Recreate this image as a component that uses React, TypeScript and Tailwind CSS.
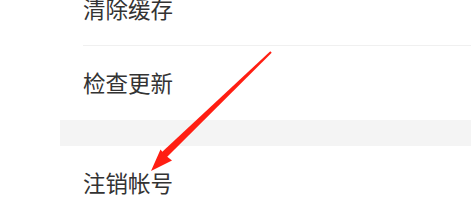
import React from 'react';

const rows = ['清除缓存', '检查更新'];

export default function App() {
  return (
    <div className="relative w-[471px] h-[209px] overflow-hidden bg-white" style={{ fontFamily: '"Noto Sans CJK SC", "Noto Sans", sans-serif' }}>
      <div className="ml-[60px] -mt-[28px] flex flex-col">
        {rows.map((label, i) => (
          <div key={label} className="pl-[23px]">
            <div className={`h-[74px] flex items-center text-[22.5px] text-[#333333] ${i === 0 ? 'border-b border-[#f0f0f0]' : ''}`}>
              {label}
            </div>
          </div>
        ))}
        <div className="h-[26px] bg-[#f4f4f4]" />
        <div className="pl-[23px] h-[74px] flex items-center text-[22.5px] text-[#333333]">注销帐号</div>
      </div>

      {/* red annotation arrow */}
      <svg className="absolute left-0 top-0 pointer-events-none" width="471" height="209" viewBox="0 0 471 209">
        <polygon points="270.3,51.3 271.7,52.7 166.5,157.5 161.5,152.5" fill="#ff1e12" />
        <polygon points="151,171 160.5,149.5 165,155 172,160.5" fill="#ff1e12" />
      </svg>
    </div>
  );
}
